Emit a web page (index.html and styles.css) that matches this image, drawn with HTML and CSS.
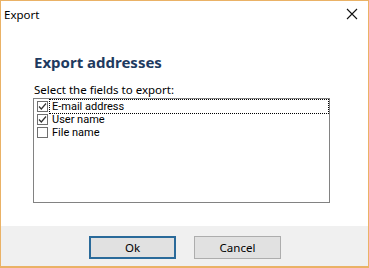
FILE: index.html
```html
<!DOCTYPE html>
<html>
<head>
<meta charset="utf-8">
<link rel="stylesheet" href="styles.css">
</head>
<body>
<div class="window">
  <div class="titlebar">
    <span class="title">Export</span>
    <svg class="close" width="12" height="12" viewBox="0 0 12 12"><path d="M1 1 L11 11 M11 1 L1 11" stroke="#111" stroke-width="1.1" fill="none"/></svg>
  </div>
  <div class="content">
    <h1 class="heading">Export addresses</h1>
    <div class="label">Select the fields to export:</div>
    <div class="listbox">
      <div class="item">
        <svg class="cb" width="11" height="11" viewBox="0 0 11 11"><rect x="0.5" y="0.5" width="10" height="10" fill="#fff" stroke="#6f6f6f"/><path d="M2 5.5 L4.3 8 L9 2.5" stroke="#333" stroke-width="1.2" fill="none"/></svg>
        <span class="text focus">E-mail address</span>
      </div>
      <div class="item">
        <svg class="cb" width="11" height="11" viewBox="0 0 11 11"><rect x="0.5" y="0.5" width="10" height="10" fill="#fff" stroke="#6f6f6f"/><path d="M2 5.5 L4.3 8 L9 2.5" stroke="#333" stroke-width="1.2" fill="none"/></svg>
        <span class="text">User name</span>
      </div>
      <div class="item">
        <svg class="cb" width="11" height="11" viewBox="0 0 11 11"><rect x="0.5" y="0.5" width="10" height="10" fill="#fff" stroke="#6f6f6f"/></svg>
        <span class="text">File name</span>
      </div>
    </div>
  </div>
  <div class="footer">
    <button class="btn default">Ok</button>
    <button class="btn">Cancel</button>
  </div>
</div>
</body>
</html>
```

FILE: styles.css
```css
html, body {
  margin: 0;
  padding: 0;
  background: #fff;
}
.window {
  width: 369px;
  height: 268px;
  box-sizing: border-box;
  border: 1px solid #eab266;
  border-bottom-width: 2px;
  display: flex;
  flex-direction: column;
  font-family: "Noto Sans", "Open Sans", sans-serif;
  font-size: 11px;
  color: #000;
  background: #fff;
}
.titlebar {
  height: 28px;
  display: flex;
  align-items: center;
  justify-content: space-between;
  padding: 0 10px 0 3px;
  flex-shrink: 0;
}
.title {
  font-size: 11.5px;
  margin-top: -2px;
}
.close {
  display: block;
  margin-top: -3px;
}
.content {
  flex: 1;
  padding: 0 0 0 32px;
  display: flex;
  flex-direction: column;
}
.heading {
  margin: 23px 0 0 1px;
  font-size: 15px;
  font-weight: 700;
  color: #1e3a5f;
  line-height: 20px;
}
.label {
  margin: 10px 0 0 1px;
  line-height: 16px;
  font-size: 11.5px;
}
.listbox {
  width: 297px;
  height: 105px;
  box-sizing: border-box;
  border: 1px solid #828282;
  padding: 1px 0 0 3px;
}
.item {
  display: flex;
  align-items: center;
  height: 13px;
}
.cb {
  display: block;
  flex-shrink: 0;
}
.text {
  margin-left: 2px;
  padding: 0 0 0 2px;
  line-height: 13px;
  height: 13px;
  flex: 1;
  box-sizing: border-box;
  font-family: Roboto, "Noto Sans", sans-serif;
  font-size: 11px;
}
.focus {
  outline: 1px dotted #000;
  outline-offset: 0;
  margin-right: 1px;
}
.footer {
  height: 40px;
  background: #f0f0f0;
  flex-shrink: 0;
  display: flex;
  align-items: flex-start;
  padding: 10px 0 0 88px;
  box-sizing: border-box;
  gap: 18px;
}
.btn {
  width: 87px;
  height: 23px;
  box-sizing: border-box;
  background: #e1e1e1;
  border: 1px solid #adadad;
  font-family: "Noto Sans", "Open Sans", sans-serif;
  font-size: 11.5px;
  color: #000;
  padding: 0;
  margin: 0;
}
.btn.default {
  border: 2px solid #2a6a9a;
}
```
